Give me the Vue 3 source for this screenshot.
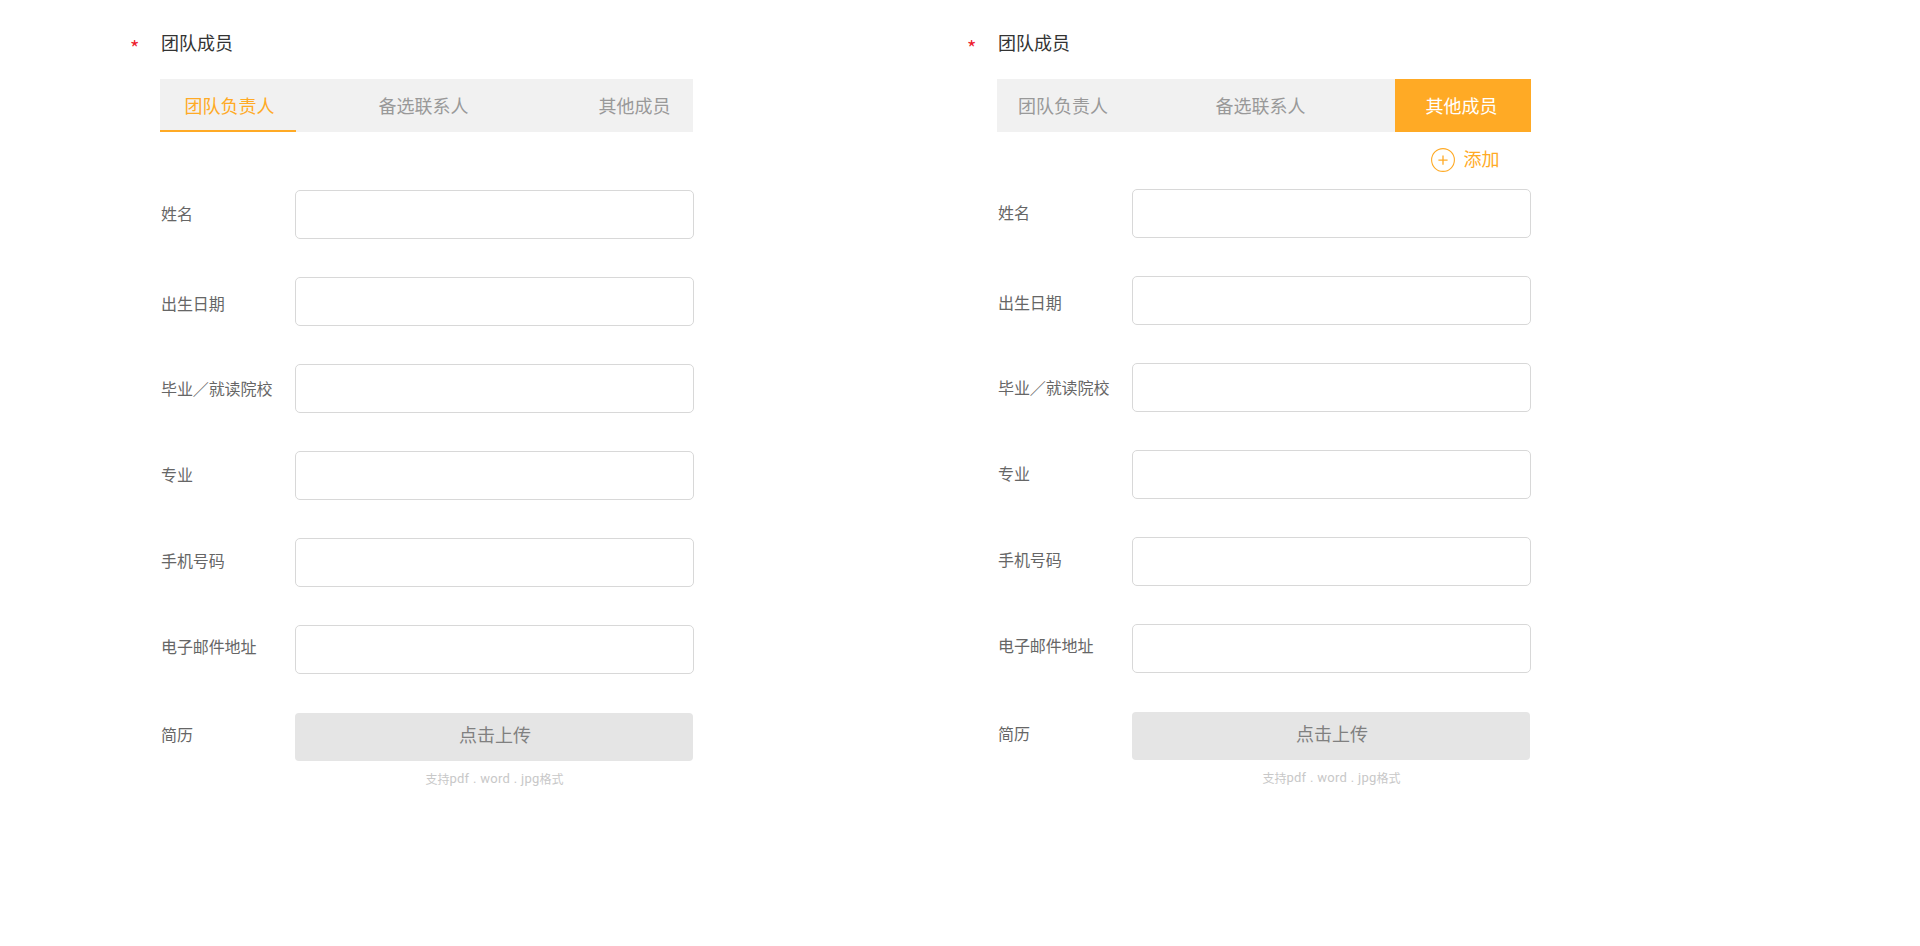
<script setup>
const fields = ['姓名', '出生日期', '毕业／就读院校', '专业', '手机号码', '电子邮件地址']
const tabs = ['团队负责人', '备选联系人', '其他成员']
const panels = [
  { name: 'leader', active: 0, canAdd: false },
  { name: 'others', active: 2, canAdd: true },
]
</script>

<template>
  <main class="page">
    <section v-for="panel in panels" :key="panel.name" class="panel" :class="panel.name">
      <span class="required">*</span>
      <div class="content">
        <h2 class="title">团队成员</h2>
        <nav class="tabs">
          <a v-for="(tab, i) in tabs" :key="tab" class="tab" :class="{ active: panel.active === i }"><span>{{ tab }}</span></a>
        </nav>
        <div class="toolbar">
          <button v-if="panel.canAdd" class="add">
            <svg width="24" height="24" viewBox="0 0 24 24" fill="none" stroke="#ffaa25">
              <circle cx="12" cy="12" r="11.4" stroke-width="1.1" />
              <path d="M12 7.4v9.4M7.4 12.1h9.2" stroke-width="1.3" />
            </svg>
            <span>添加</span>
          </button>
        </div>
        <form class="form">
          <div v-for="field in fields" :key="field" class="row">
            <label class="label">{{ field }}</label>
            <input class="input" type="text" />
          </div>
          <div class="row">
            <label class="label">简历</label>
            <div class="upload-area">
              <button type="button" class="upload">点击上传</button>
              <p class="hint"><span>支持</span><span class="latin">pdf . word . jpg</span><span>格式</span></p>
            </div>
          </div>
        </form>
      </div>
    </section>
  </main>
</template>

<style>
body { margin: 0; background: #fff; }
</style>

<style scoped>
.page {
  display: grid;
  grid-template-columns: 837px 1fr;
  height: 946px;
  padding-left: 130px;
  box-sizing: border-box;
  overflow: hidden;
  font-family: "Noto Sans CJK SC", sans-serif;
}
.panel { display: flex; }
.required {
  width: 30px;
  padding-top: 36px;
  color: #ee1c2e;
  font-size: 20px;
  line-height: 24px;
}
.content { width: 534px; }
.title {
  box-sizing: border-box;
  margin: 0;
  padding: 29px 0 0 1px;
  height: 78px;
  font-size: 18px;
  font-weight: 400;
  line-height: 26px;
  color: #333;
}
.tabs {
  display: flex;
  justify-content: space-between;
  width: 533px;
  height: 53.5px;
  margin-top: .5px;
  background: #f1f1f1;
}
.tab {
  display: flex;
  justify-content: center;
  box-sizing: border-box;
  width: 136px;
  padding-top: 13px;
  font-size: 18px;
  line-height: 26px;
  color: #999;
}
.leader .tab:nth-child(1) { color: #ffaa25; border-bottom: 2px solid #ffaa25; padding-left: 3px; }
.leader .tab:nth-child(2) { padding-right: 6px; }
.leader .tab:nth-child(3) { padding-left: 19px; }
.others .tabs { width: 534px; }
.others .tab:nth-child(1) { padding-right: 4px; }
.others .tab:nth-child(2) { padding-right: 7px; }
.others .tab:nth-child(3) { color: #fff; background: #ffaa25; padding-right: 3px; }
.toolbar {
  display: flex;
  justify-content: flex-end;
  height: 58px;
}
.others .toolbar { height: 57px; }
.add {
  display: flex;
  align-items: flex-start;
  gap: 9px;
  margin: 0;
  padding: 16px 31.5px 0 0;
  border: 0;
  background: none;
  color: #ffaa25;
  font: 18px/24px "Noto Sans CJK SC", sans-serif;
}
.add span { margin-top: -2px; }
.row {
  display: flex;
  height: 87px;
}
.label {
  flex: none;
  width: 134px;
  margin-top: 11px;
  padding-left: 1px;
  font-size: 16px;
  letter-spacing: -.1px;
  line-height: 24px;
  color: #666;
}
.row:nth-child(2) .label { margin-top: 14px; }
.row:nth-child(3) .label { margin-top: 12px; }
.row:nth-child(4) .label { margin-top: 11px; }
.row:nth-child(5) .label { margin-top: 10px; }
.row:nth-child(6) .label { margin-top: 9px; }
.row:nth-child(7) .label { margin-top: 10px; }
.input {
  box-sizing: border-box;
  width: 399px;
  height: 49px;
  margin: 0;
  padding: 0 12px;
  border: 1px solid #d8d8d8;
  border-radius: 5px;
  background: #fff;
  font-size: 16px;
  outline: none;
}
.upload-area { width: 398px; }
.upload {
  display: block;
  width: 398px;
  height: 48px;
  margin: .5px 0 0;
  padding: 0 0 6px 2px;
  border: 0;
  border-radius: 4px;
  background: #e5e5e5;
  color: #808080;
  font: 18px/26px "Noto Sans CJK SC", sans-serif;
}
.hint {
  display: flex;
  justify-content: center;
  margin: 9px 0 0;
  padding-left: 1px;
  font-size: 12px;
  line-height: 18px;
  color: #c8c8c8;
}
.latin {
  font-family: Roboto, sans-serif;
  font-size: 13px;
  letter-spacing: .3px;
  white-space: pre;
}
</style>
